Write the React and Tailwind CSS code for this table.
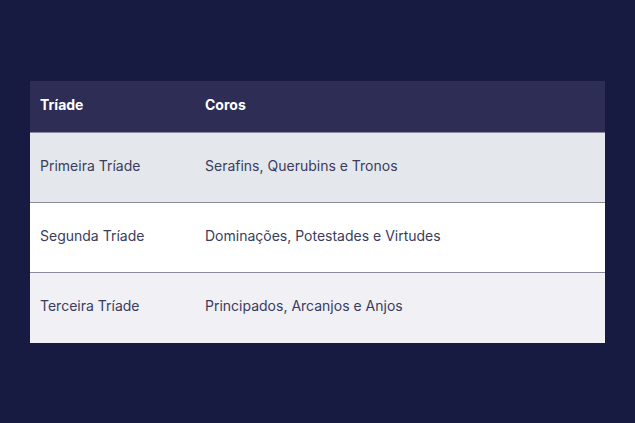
const rows = [
  { triade: "Primeira Tríade", coros: "Serafins, Querubins e Tronos", bg: "bg-[#e4e8ec]" },
  { triade: "Segunda Tríade", coros: "Dominações, Potestades e Virtudes", bg: "bg-white" },
  { triade: "Terceira Tríade", coros: "Principados, Arcanjos e Anjos", bg: "bg-[#f0f0f5]" },
];

const App = () => {
  return (
    <div
      className="min-h-screen h-[423px] w-full bg-[#171b41] flex items-center justify-center px-[30px]"
      style={{ fontFamily: "Inter, 'Noto Sans', sans-serif" }}
    >
      <div className="w-full flex flex-col text-[14px]">
        <div className="grid grid-cols-[165px_1fr] h-[52px] items-center pb-[4px] bg-[#2e2d55] text-white font-bold border-b border-[#8a8aa0]">
          <div className="px-[10px]">Tríade</div>
          <div className="px-[10px]">Coros</div>
        </div>
        {rows.map((r, i) => (
          <div
            key={r.triade}
            className={`grid grid-cols-[165px_1fr] h-[70px] items-center pb-[4px] text-[#3a3c5c] ${r.bg} ${
              i < rows.length - 1 ? "border-b border-[#8a8a98]" : ""
            }`}
          >
            <div className="px-[10px]">{r.triade}</div>
            <div className="px-[10px]">{r.coros}</div>
          </div>
        ))}
      </div>
    </div>
  );
};

export default App;
